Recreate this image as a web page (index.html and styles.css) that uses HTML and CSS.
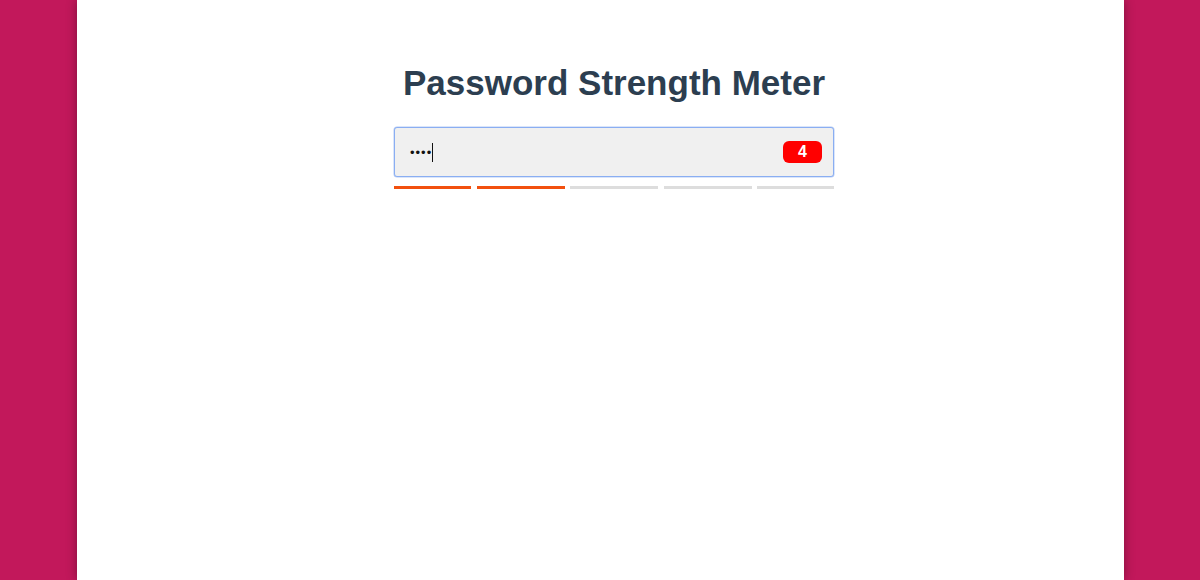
FILE: index.html
```html
<!DOCTYPE html>
<html>
<head>
<meta charset="utf-8">
<link rel="stylesheet" href="styles.css">
</head>
<body>
<div class="page">
  <main class="panel">
    <div class="content">
      <h1 class="title">Password Strength Meter</h1>
      <div class="field">
        <span class="value">••••</span><span class="caret"></span>
        <span class="badge">4</span>
      </div>
      <div class="meter">
        <span class="seg on"></span>
        <span class="seg on"></span>
        <span class="seg"></span>
        <span class="seg"></span>
        <span class="seg"></span>
      </div>
    </div>
  </main>
</div>
</body>
</html>
```

FILE: styles.css
```css
html, body {
  margin: 0;
  padding: 0;
  height: 100%;
}
body {
  background: #c2185b;
  font-family: "Liberation Sans", Arial, sans-serif;
  overflow: hidden;
}
.page {
  display: flex;
  height: 580px;
  padding-left: 77px;
}
.panel {
  width: 1047px;
  height: 100%;
  background: #ffffff;
  box-shadow: 0 0 10px rgba(0, 0, 0, 0.35);
  display: flex;
  justify-content: center;
  padding-left: 27px;
  box-sizing: border-box;
}
.content {
  width: 440px;
  display: flex;
  flex-direction: column;
  align-items: stretch;
}
.title {
  margin: 63px 0 24px;
  font-size: 35px;
  font-weight: bold;
  line-height: 40px;
  color: #2c3e50;
  text-align: center;
  white-space: nowrap;
}
.field {
  height: 50px;
  box-sizing: border-box;
  border: 1px solid #8aaef2;
  box-shadow: 0 0 0 0.5px #b5cbf5;
  border-radius: 3px;
  background: #f0f0f0;
  display: flex;
  align-items: center;
  padding: 0 11px 0 15px;
}
.value {
  font-size: 13px;
  color: #111;
  letter-spacing: 1px;
}
.caret {
  width: 1px;
  height: 19px;
  background: #111;
  margin-left: 0;
}
.badge {
  margin-left: auto;
  width: 39px;
  height: 22px;
  border-radius: 6px;
  background: #ff0000;
  color: #fff;
  font-size: 16px;
  font-weight: bold;
  display: flex;
  align-items: center;
  justify-content: center;
}
.meter {
  margin-top: 9px;
  display: grid;
  grid-template-columns: 77px 88px 88px 88px 77px;
  column-gap: 5.5px;
}
.seg {
  height: 3px;
  background: #dddddd;
}
.seg.on {
  background: #f2500f;
}
```
